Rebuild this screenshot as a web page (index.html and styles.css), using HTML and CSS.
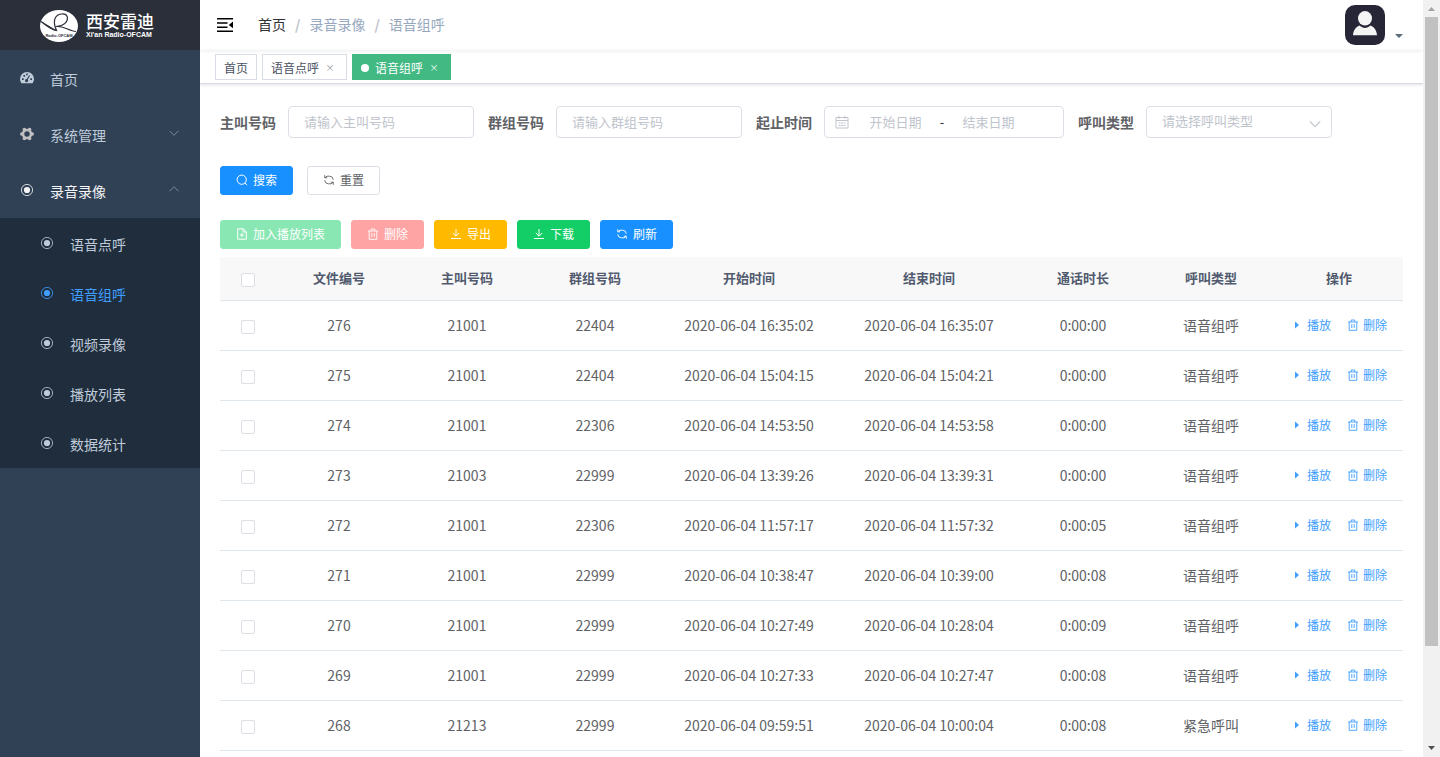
FILE: index.html
```html
<!DOCTYPE html>
<html lang="zh-CN">
<head>
<meta charset="utf-8">
<meta name="viewport" content="width=device-width, initial-scale=1">
<title>语音组呼</title>
<link rel="stylesheet" href="styles.css">
</head>
<body>
<svg class="sprite" aria-hidden="true">
  <symbol id="dot" viewBox="0 0 14 14"><circle cx="7" cy="7" r="5.6" fill="none" stroke="currentColor" stroke-width=".8"/><circle cx="7" cy="7" r="3.1" fill="currentColor"/></symbol>
  <symbol id="down" viewBox="0 0 12 12"><path d="M1.5 3.8 6 8.3l4.500-4.500" fill="none" stroke="currentColor"/></symbol>
  <symbol id="up" viewBox="0 0 12 12"><path d="M1.500 8.200 6 3.700l4.500 4.500" fill="none" stroke="currentColor"/></symbol>
  <symbol id="trash" viewBox="0 0 12 12"><path d="M1 3h10M2.200 3v8.300h7.600V3M4.200 3V1h3.600v2M4.800 5v4M7.200 5v4" fill="none" stroke="currentColor" stroke-width=".9"/></symbol>
  <symbol id="refresh" viewBox="0 0 12 12"><path d="M4 2.200h2.500a3.800 3.800 0 0 1 3.800 3.600M8 9.800H5.500a3.800 3.800 0 0 1-3.800-3.600M1.700 1.200v2.600h2.500M1.900 3.600 4 2.200M10.300 10.800V8.200H7.800M10.100 8.400 8 9.800" fill="none" stroke="currentColor" stroke-width=".9"/></symbol>
  <symbol id="download" viewBox="0 0 12 12"><path d="M6 1v7M2.800 5 6 8.200 9.200 5M1 10.500h10" fill="none" stroke="currentColor"/></symbol>
  <symbol id="search" viewBox="0 0 12 12"><circle cx="5.700" cy="5.700" r="4.600" fill="none" stroke="currentColor"/><path d="m9 9 2 2.200" fill="none" stroke="currentColor"/></symbol>
  <symbol id="add" viewBox="0 0 12 12"><path d="M1.700.8h5.500l3.100 3v7.400H1.700zM7 1v3h3.200M6 5v4M4 7h4" fill="none" stroke="currentColor"/></symbol>
  <symbol id="play" viewBox="0 0 12 12"><path d="M4 2.500 8 6 4 9.500z" fill="currentColor"/></symbol>
</svg>
<div class="app">
  <aside class="sidebar">
    <a class="logo" href="#">
      <svg class="logo-mark" viewBox="0 0 38 32" aria-hidden="true">
        <ellipse cx="19" cy="16" rx="19" ry="16" fill="#fff"/>
        <path d="M1 11.500C6 15.500 11 19.500 16.500 20.500 14 15 13.500 11 15.500 7.500c2.500-4.200 10.500-5 11.800-.5C28.300 12 23 16.500 16 16.500c6-1.500 13 4.500 20 5" fill="none" stroke="#2b2f3a" stroke-width="1.200"/>
        <path d="M1 11 17.500 21C12 20.500 7 16.500 1 11z" fill="#2b2f3a"/>
        <text x="19" y="27" class="mark-text">Radio-OFCAM</text>
      </svg>
      <span class="logo-name"><strong>西安雷迪</strong><small>Xi'an Radio-OFCAM</small></span>
    </a>
    <nav class="menu">
      <a class="item" href="#">
        <svg class="i14" viewBox="0 0 14 14" aria-hidden="true"><path fill="currentColor" fill-rule="evenodd" d="M1.400 12.200A7 7 0 0 1 0 8a7 7 0 0 1 14 0 7 7 0 0 1-1.400 4.200zM2 7.300v1.700h1.700V7.300zM3.400 4v1.700h1.700V4zM6.200 2.600v1.700h1.600V2.600zM10.300 7.300v1.700H12V7.300zM9.100 4.300 6.800 8a1.600 1.600 0 1 0 1 .5l2.200-3.700z"/></svg>
        <span>首页</span></a>
      <a class="item" href="#">
        <svg class="i14 gear" viewBox="0 0 14 14" aria-hidden="true"><circle cx="7" cy="7" r="4" fill="none" stroke="currentColor" stroke-width="2.600"/><g fill="currentColor"><circle cx="12.200" cy="7" r="1.800"/><circle cx="1.800" cy="7" r="1.800"/><circle cx="9.600" cy="2.500" r="1.800"/><circle cx="4.400" cy="2.500" r="1.800"/><circle cx="9.600" cy="11.500" r="1.800"/><circle cx="4.400" cy="11.500" r="1.800"/></g></svg>
        <span>系统管理</span><svg class="arrow" aria-hidden="true"><use href="#down"/></svg></a>
      <a class="item open" href="#"><svg class="i14" aria-hidden="true"><use href="#dot"/></svg><span>录音录像</span><svg class="arrow" aria-hidden="true"><use href="#up"/></svg></a>
      <div class="submenu">
        <a class="item" href="#"><svg class="i14" aria-hidden="true"><use href="#dot"/></svg><span>语音点呼</span></a>
        <a class="item active" href="#"><svg class="i14" aria-hidden="true"><use href="#dot"/></svg><span>语音组呼</span></a>
        <a class="item" href="#"><svg class="i14" aria-hidden="true"><use href="#dot"/></svg><span>视频录像</span></a>
        <a class="item" href="#"><svg class="i14" aria-hidden="true"><use href="#dot"/></svg><span>播放列表</span></a>
        <a class="item" href="#"><svg class="i14" aria-hidden="true"><use href="#dot"/></svg><span>数据统计</span></a>
      </div>
    </nav>
  </aside>
  <div class="main">
    <header class="navbar">
      <button class="burger" type="button" aria-label="收起菜单"><svg viewBox="0 0 16 16" aria-hidden="true"><path d="M0 1h16v1.500H0zM0 5.200h10.500v1.500H0zM0 9.400h10.500v1.500H0zM0 13.600h16v1.500H0zM16 4.600v6.600L11.800 8z"/></svg></button>
      <nav class="crumbs" aria-label="面包屑"><a href="#">首页</a><i>/</i><span>录音录像</span><i>/</i><span>语音组呼</span></nav>
      <button class="user" type="button" aria-label="用户菜单">
        <svg class="avatar" viewBox="0 0 40 40" aria-hidden="true"><rect width="40" height="40" rx="10" fill="#272636"/><path d="M8 30.300c.3-4.800 2.600-8.300 6.500-9.800 3.500 3.200 7.500 3.200 11 0 3.900 1.500 6.200 5 6.500 9.800z" fill="#f4f4f4"/><ellipse cx="20" cy="13.300" rx="7" ry="7.300" fill="#f4f4f4"/></svg>
        <svg class="caret" viewBox="0 0 8 4" aria-hidden="true"><path d="M0 0h8L4 4z" fill="#5a6b7c"/></svg>
      </button>
    </header>
    <nav class="tags" aria-label="标签">
      <a class="tag" href="#">首页</a>
      <a class="tag" href="#">语音点呼<span class="close">×</span></a>
      <a class="tag on" href="#">语音组呼<span class="close">×</span></a>
    </nav>
    <main class="content">
      <form class="filters">
        <div class="field"><label for="caller">主叫号码</label><input class="box" id="caller" type="text" placeholder="请输入主叫号码"></div>
        <div class="field"><label for="group">群组号码</label><input class="box" id="group" type="text" placeholder="请输入群组号码"></div>
        <div class="field"><label for="from">起止时间</label>
          <div class="box range">
            <svg viewBox="0 0 14 14" aria-hidden="true"><path d="M1 2.500h12v10.500H1zM1 5.500h12M4 .8v3M10 .8v3M3.500 8h2M6 8h2M8.500 8h2M3.500 10.500h2M6 10.500h2M8.500 10.500h2" fill="none" stroke="currentColor"/></svg>
            <input id="from" type="text" placeholder="开始日期"><span>-</span><input type="text" aria-label="结束日期" placeholder="结束日期">
          </div></div>
        <div class="field"><label for="kind">呼叫类型</label>
          <div class="pick"><select class="box" id="kind"><option>请选择呼叫类型</option><option>语音组呼</option><option>紧急呼叫</option></select><svg aria-hidden="true"><use href="#down"/></svg></div></div>
        <div class="actions">
          <button class="btn blue" type="button"><svg aria-hidden="true"><use href="#search"/></svg>搜索</button>
          <button class="btn" type="reset"><svg aria-hidden="true"><use href="#refresh"/></svg>重置</button>
        </div>
      </form>
      <div class="toolbar">
        <button class="btn mint" type="button" disabled><svg aria-hidden="true"><use href="#add"/></svg>加入播放列表</button>
        <button class="btn pink" type="button" disabled><svg aria-hidden="true"><use href="#trash"/></svg>删除</button>
        <button class="btn amber" type="button"><svg aria-hidden="true"><use href="#download"/></svg>导出</button>
        <button class="btn green" type="button"><svg aria-hidden="true"><use href="#download"/></svg>下载</button>
        <button class="btn blue" type="button"><svg aria-hidden="true"><use href="#refresh"/></svg>刷新</button>
      </div>
      <table class="records">
        <colgroup><col class="c-check"><col><col><col><col class="c-time"><col class="c-time"><col><col><col></colgroup>
        <thead><tr><th><input type="checkbox" aria-label="全选"></th><th>文件编号</th><th>主叫号码</th><th>群组号码</th><th>开始时间</th><th>结束时间</th><th>通话时长</th><th>呼叫类型</th><th>操作</th></tr></thead>
        <tbody>
          <tr><td><input type="checkbox" aria-label="选择 276"></td><td>276</td><td>21001</td><td>22404</td><td>2020-06-04 16:35:02</td><td>2020-06-04 16:35:07</td><td>0:00:00</td><td>语音组呼</td><td><div class="ops"><button type="button"><svg aria-hidden="true"><use href="#play"/></svg>播放</button><button type="button"><svg aria-hidden="true"><use href="#trash"/></svg>删除</button></div></td></tr>
          <tr><td><input type="checkbox" aria-label="选择 275"></td><td>275</td><td>21001</td><td>22404</td><td>2020-06-04 15:04:15</td><td>2020-06-04 15:04:21</td><td>0:00:00</td><td>语音组呼</td><td><div class="ops"><button type="button"><svg aria-hidden="true"><use href="#play"/></svg>播放</button><button type="button"><svg aria-hidden="true"><use href="#trash"/></svg>删除</button></div></td></tr>
          <tr><td><input type="checkbox" aria-label="选择 274"></td><td>274</td><td>21001</td><td>22306</td><td>2020-06-04 14:53:50</td><td>2020-06-04 14:53:58</td><td>0:00:00</td><td>语音组呼</td><td><div class="ops"><button type="button"><svg aria-hidden="true"><use href="#play"/></svg>播放</button><button type="button"><svg aria-hidden="true"><use href="#trash"/></svg>删除</button></div></td></tr>
          <tr><td><input type="checkbox" aria-label="选择 273"></td><td>273</td><td>21003</td><td>22999</td><td>2020-06-04 13:39:26</td><td>2020-06-04 13:39:31</td><td>0:00:00</td><td>语音组呼</td><td><div class="ops"><button type="button"><svg aria-hidden="true"><use href="#play"/></svg>播放</button><button type="button"><svg aria-hidden="true"><use href="#trash"/></svg>删除</button></div></td></tr>
          <tr><td><input type="checkbox" aria-label="选择 272"></td><td>272</td><td>21001</td><td>22306</td><td>2020-06-04 11:57:17</td><td>2020-06-04 11:57:32</td><td>0:00:05</td><td>语音组呼</td><td><div class="ops"><button type="button"><svg aria-hidden="true"><use href="#play"/></svg>播放</button><button type="button"><svg aria-hidden="true"><use href="#trash"/></svg>删除</button></div></td></tr>
          <tr><td><input type="checkbox" aria-label="选择 271"></td><td>271</td><td>21001</td><td>22999</td><td>2020-06-04 10:38:47</td><td>2020-06-04 10:39:00</td><td>0:00:08</td><td>语音组呼</td><td><div class="ops"><button type="button"><svg aria-hidden="true"><use href="#play"/></svg>播放</button><button type="button"><svg aria-hidden="true"><use href="#trash"/></svg>删除</button></div></td></tr>
          <tr><td><input type="checkbox" aria-label="选择 270"></td><td>270</td><td>21001</td><td>22999</td><td>2020-06-04 10:27:49</td><td>2020-06-04 10:28:04</td><td>0:00:09</td><td>语音组呼</td><td><div class="ops"><button type="button"><svg aria-hidden="true"><use href="#play"/></svg>播放</button><button type="button"><svg aria-hidden="true"><use href="#trash"/></svg>删除</button></div></td></tr>
          <tr><td><input type="checkbox" aria-label="选择 269"></td><td>269</td><td>21001</td><td>22999</td><td>2020-06-04 10:27:33</td><td>2020-06-04 10:27:47</td><td>0:00:08</td><td>语音组呼</td><td><div class="ops"><button type="button"><svg aria-hidden="true"><use href="#play"/></svg>播放</button><button type="button"><svg aria-hidden="true"><use href="#trash"/></svg>删除</button></div></td></tr>
          <tr><td><input type="checkbox" aria-label="选择 268"></td><td>268</td><td>21213</td><td>22999</td><td>2020-06-04 09:59:51</td><td>2020-06-04 10:00:04</td><td>0:00:08</td><td>紧急呼叫</td><td><div class="ops"><button type="button"><svg aria-hidden="true"><use href="#play"/></svg>播放</button><button type="button"><svg aria-hidden="true"><use href="#trash"/></svg>删除</button></div></td></tr>
        </tbody>
      </table>
    </main>
  </div>
  <div class="scroll" aria-hidden="true">
    <svg viewBox="0 0 17 17"><path d="M5 11h7L8.500 7z" fill="#a3a3a3"/></svg>
    <div class="track"><div class="thumb"></div></div>
    <svg viewBox="0 0 17 17"><path d="M5 6h7l-3.500 4z" fill="#505050"/></svg>
  </div>
</div>
</body>
</html>
```

FILE: styles.css
```css
*, *::before, *::after { box-sizing: border-box; }
body {
  margin: 0;
  font: 14px/20px "Noto Sans CJK SC", sans-serif;
  color: #606266;
  background: #fff;
}
a { color: inherit; text-decoration: none; }
button, input, select { font: inherit; color: inherit; margin: 0; }
button { padding: 0; border: 0; background: none; cursor: pointer; }
svg { flex: none; display: block; }
.sprite { position: absolute; width: 0; height: 0; }

.app {
  display: grid;
  grid-template-columns: 200px minmax(0, 1fr) 17px;
  height: 100vh;
  overflow: hidden;
}

/* Sidebar */
.sidebar { background: #304156; color: #bfcbd9; }
.logo {
  display: flex;
  align-items: center;
  gap: 8px;
  height: 50px;
  padding: 2px 40px 0;
  background: #2b2f3a;
  color: #fff;
  white-space: nowrap;
}
.logo-mark { width: 38px; height: 32px; }
.mark-text { font: bold 4px "Liberation Sans", sans-serif; text-anchor: middle; fill: #2b2f3a; }
.logo-name { display: flex; flex-direction: column; }
.logo-name strong { font-size: 17px; line-height: 20px; font-weight: 500; }
.logo-name small { padding-bottom: 3px; font: bold 7px/8px "Liberation Sans", sans-serif; }
.item { display: flex; align-items: center; gap: 16px; height: 56px; padding: 0 20px; }
.item span { flex: 1; padding-top: 2px; }
.i14 { width: 14px; height: 14px; }
.gear { color: #c0c0c0; }
.arrow { width: 12px; height: 12px; margin-bottom: 2px; color: #7d8a9a; }
.open { color: #f4f4f5; }
.submenu { background: #1f2d3d; }
.submenu .item { height: 50px; padding-left: 40px; }
.submenu .active { color: #409eff; }

/* Top bar */
.main { min-width: 0; overflow: hidden; }
.navbar {
  display: flex;
  align-items: center;
  height: 50px;
  padding: 0 20px 0 17px;
  box-shadow: 0 1px 4px rgba(0, 21, 41, .08);
}
.burger svg { width: 16px; height: 16px; }
.crumbs { display: flex; flex: 1; margin: 0 0 2px 25px; color: #97a8be; }
.crumbs a { color: #303133; }
.crumbs i { margin: 0 9px; font-style: normal; font-weight: 700; color: #c0c4cc; }
.user { display: flex; align-items: flex-end; gap: 10px; }
.avatar { width: 40px; height: 40px; }
.caret { width: 8px; height: 4px; margin-bottom: 7px; }

/* Tag bar */
.tags {
  display: flex;
  gap: 5px;
  height: 34px;
  padding: 4px 15px 0;
  border-bottom: 1px solid #d8dce5;
  box-shadow: 0 1px 3px rgba(0, 0, 0, .12);
}
.tag {
  display: flex;
  align-items: center;
  height: 26px;
  padding: 1px 8px 0;
  border: 1px solid #d8dce5;
  font-size: 12px;
  line-height: 18px;
  color: #495060;
}
.close { width: 16px; margin-left: 3px; text-align: center; font-size: 9px; color: #8a8f99; }
.on { background: #42b983; border-color: #42b983; color: #fff; }
.on::before { content: ""; width: 8px; height: 8px; margin-right: 6px; border-radius: 50%; background: #fff; }
.on .close { color: #fff; }

/* Filters */
.content { padding: 22px 20px 0; }
.filters { display: flex; flex-wrap: wrap; gap: 28px 14px; }
.field { display: flex; align-items: center; gap: 12px; }
.field label { padding-bottom: 1px; font-weight: 700; }
.box {
  width: 186px;
  height: 32px;
  padding: 0 15px 2px;
  border: 1px solid #dcdfe6;
  border-radius: 4px;
  background: #fff;
  font-size: 13px;
  outline: 0;
}
::placeholder { color: #c0c4cc; opacity: 1; }
.range { display: flex; align-items: center; width: 240px; padding: 0 10px; }
.range svg { width: 14px; height: 14px; color: #c0c4cc; }
.range input { width: 93px; min-width: 0; padding: 0; border: 0; outline: 0; background: none; text-align: center; }
.range span { width: 8px; margin: 0 -4px; text-align: center; color: #303133; }
.pick { display: grid; align-items: center; }
.pick > * { grid-area: 1 / 1; }
.pick select { appearance: none; color: #c0c4cc; }
.pick svg { width: 14px; height: 14px; margin: 4px 10px 0; justify-self: end; color: #c0c4cc; pointer-events: none; }
.actions { display: flex; flex-basis: 100%; gap: 14px; }
.btn {
  display: inline-flex;
  align-items: center;
  gap: 5px;
  height: 29px;
  padding: 0 15px 1px;
  border: 1px solid #dcdfe6;
  border-radius: 3px;
  background: #fff;
  font-size: 12px;
}
.btn svg { width: 12px; height: 12px; }
.blue, .mint, .pink, .amber, .green { color: #fff; }
.blue { background: #1890ff; border-color: #1890ff; }
.mint { background: #89e7b3; border-color: #89e7b3; }
.pink { background: #ffa4a4; border-color: #ffa4a4; }
.amber { background: #ffba00; border-color: #ffba00; }
.green { background: #13ce66; border-color: #13ce66; }
.toolbar { display: flex; gap: 10px; margin: 25px 0 8px; }

/* Records */
.records { width: 100%; table-layout: fixed; border-collapse: separate; border-spacing: 0; text-align: center; }
.c-check { width: 55px; }
.c-time { width: 180px; }
.records th, .records td { padding: 0 0 1px; border-bottom: 1px solid #dfe6ec; }
.records th { height: 44px; background: #f8f8f9; color: #515a6e; font-size: 13px; font-weight: 700; }
.records td { height: 50px; }
.records input {
  display: block;
  appearance: none;
  width: 14px;
  height: 14px;
  margin: 3px auto 0;
  border: 1px solid #dcdfe6;
  border-radius: 2px;
  background: #fff;
}
.ops { display: flex; justify-content: center; gap: 16px; color: #409eff; font-size: 12px; }
.ops button { display: flex; align-items: center; gap: 4px; }
.ops svg { width: 12px; height: 12px; }

/* Scroll bar */
.scroll { display: flex; flex-direction: column; background: #f1f1f1; }
.scroll svg { width: 17px; height: 17px; }
.track { flex: 1; padding: 0 2px; }
.thumb { height: 87%; background: #c1c1c1; }
```
